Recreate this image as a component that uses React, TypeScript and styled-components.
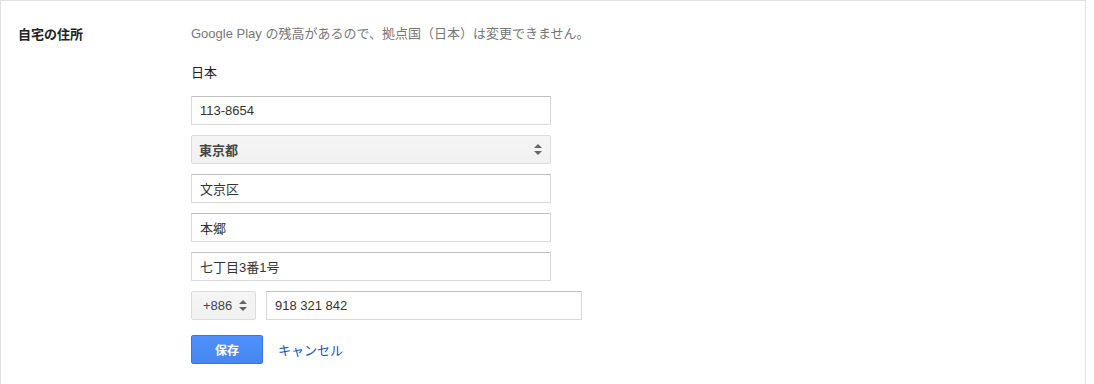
import React from 'react'
import styled, { createGlobalStyle } from 'styled-components'

const GlobalStyle = createGlobalStyle`
  body {
    margin: 0;
    background: #fff;
    font-family: Arial, "Liberation Sans", "Noto Sans CJK JP", sans-serif;
    font-size: 13px;
    color: #222;
  }
`

const Card = styled.div`
  width: 1086px;
  height: 400px;
  box-sizing: border-box;
  border: 1px solid #e0e0e0;
  border-bottom: none;
  display: flex;
  padding: 23px 0 0 17px;
`

const Label = styled.div`
  width: 173px;
  font-weight: bold;
  font-size: 13px;
  color: #222;
  line-height: 20px;
  margin-top: 1px;
`

const Column = styled.div`
  display: flex;
  flex-direction: column;
  gap: 10px;
`

const Note = styled.div`
  color: #777;
  line-height: 20px;
  margin-bottom: 9px;
`

const Country = styled.div`
  line-height: 20px;
  margin-bottom: 3px;
`

const Field = styled.div<{ $width?: number }>`
  width: ${(p) => p.$width ?? 360}px;
  height: 29px;
  box-sizing: border-box;
  border: 1px solid #d9d9d9;
  border-top-color: #c0c0c0;
  background: #fff;
  padding: 0 8px;
  display: flex;
  align-items: center;
  font-size: 13px;
  color: #333;
`

const Select = styled.div<{ $width?: number; $bold?: boolean }>`
  width: ${(p) => p.$width ?? 360}px;
  height: 29px;
  box-sizing: border-box;
  border: 1px solid #dcdcdc;
  border-radius: 2px;
  background: linear-gradient(#f5f5f5, #f1f1f1);
  padding: 0 8px 0 ${(p) => (p.$bold ? 7 : 11)}px;
  display: flex;
  align-items: center;
  justify-content: space-between;
  font-weight: ${(p) => (p.$bold ? 'bold' : 'normal')};
  font-size: 13px;
  color: #444;
`

const PhoneRow = styled.div`
  display: flex;
  gap: 10px;
`

const Actions = styled.div`
  display: flex;
  align-items: center;
  gap: 15px;
  margin-top: 5px;
`

const SaveButton = styled.button`
  width: 72px;
  height: 29px;
  border: 1px solid #3079ed;
  border-radius: 2px;
  background: linear-gradient(#4d90fe, #4787ed);
  color: #fff;
  font-family: inherit;
  font-weight: bold;
  font-size: 12px;
`

const CancelLink = styled.a`
  color: #15c;
  font-size: 13px;
  text-decoration: none;
`

function Arrows() {
  return (
    <svg width="8" height="11" viewBox="0 0 8 11">
      <path d="M4 0 L8 4 L0 4 Z" fill="#666" />
      <path d="M4 11 L8 7 L0 7 Z" fill="#666" />
    </svg>
  )
}

export default function App() {
  return (
    <>
      <GlobalStyle />
      <Card>
        <Label>自宅の住所</Label>
        <Column>
          <Note>Google Play の残高があるので、拠点国（日本）は変更できません。</Note>
          <Country>日本</Country>
          <Field>113-8654</Field>
          <Select $bold>
            東京都
            <Arrows />
          </Select>
          <Field>文京区</Field>
          <Field>本郷</Field>
          <Field>七丁目3番1号</Field>
          <PhoneRow>
            <Select $width={65}>
              +886
              <Arrows />
            </Select>
            <Field $width={316}>918 321 842</Field>
          </PhoneRow>
          <Actions>
            <SaveButton>保存</SaveButton>
            <CancelLink href="#">キャンセル</CancelLink>
          </Actions>
        </Column>
      </Card>
    </>
  )
}
